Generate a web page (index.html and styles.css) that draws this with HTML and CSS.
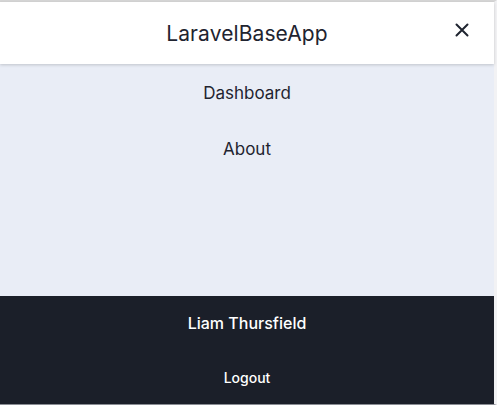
FILE: index.html
```html
<!DOCTYPE html>
<html lang="en">
<head>
<meta charset="utf-8">
<title>LaravelBaseApp</title>
<link rel="stylesheet" href="styles.css">
</head>
<body>
<div class="frame">
  <header class="topbar">
    <div class="brand">LaravelBaseApp</div>
    <button class="close" aria-label="Close menu">
      <svg width="14" height="14" viewBox="0 0 14 14" aria-hidden="true">
        <path d="M1.5 1.5 L12.5 12.5 M12.5 1.5 L1.5 12.5" stroke="#1f2430" stroke-width="2" stroke-linecap="round" fill="none"/>
      </svg>
    </button>
  </header>
  <nav class="menu">
    <a class="menu-link" href="#">Dashboard</a>
    <a class="menu-link" href="#">About</a>
  </nav>
  <footer class="account">
    <div class="user">Liam Thursfield</div>
    <a class="logout" href="#">Logout</a>
  </footer>
</div>
</body>
</html>
```

FILE: styles.css
```css
* { box-sizing: border-box; }
html, body { margin: 0; padding: 0; }
body {
  width: 497px;
  height: 405px;
  overflow: hidden;
  font-family: Inter, "Noto Sans", sans-serif;
  background: #ffffff;
}
.frame {
  display: flex;
  flex-direction: column;
  height: 405px;
  border-top: 2px solid #d6d6d6;
  border-bottom: 1px solid #8a8d94;
  border-right: 3px solid #f2f2f4;
}
.topbar {
  position: relative;
  height: 62px;
  flex: none;
  display: flex;
  align-items: center;
  justify-content: center;
  padding-top: 1px;
  background: #ffffff;
  box-shadow: 0 1px 3px rgba(0,0,0,0.18);
  z-index: 1;
}
.brand {
  font-size: 21px;
  color: #1f2430;
  letter-spacing: 0.1px;
}
.close {
  position: absolute;
  right: 25px;
  top: 21px;
  width: 14px;
  height: 14px;
  padding: 0;
  border: 0;
  background: none;
  display: flex;
  align-items: center;
  justify-content: center;
}
.menu {
  flex: 1;
  background: #e9edf6;
  display: flex;
  flex-direction: column;
  align-items: center;
  padding-top: 17px;
  gap: 32px;
}
.menu-link {
  font-size: 17px;
  line-height: 24px;
  color: #1f2430;
  text-decoration: none;
}
.account {
  height: 108px;
  flex: none;
  background: #1b1f29;
  display: flex;
  flex-direction: column;
  align-items: center;
  padding-top: 15px;
  gap: 33px;
}
.user {
  font-size: 16px;
  line-height: 24px;
  font-weight: 500;
  color: #ffffff;
}
.logout {
  font-size: 14px;
  line-height: 20px;
  font-weight: 500;
  color: #ffffff;
  text-decoration: none;
}
```
